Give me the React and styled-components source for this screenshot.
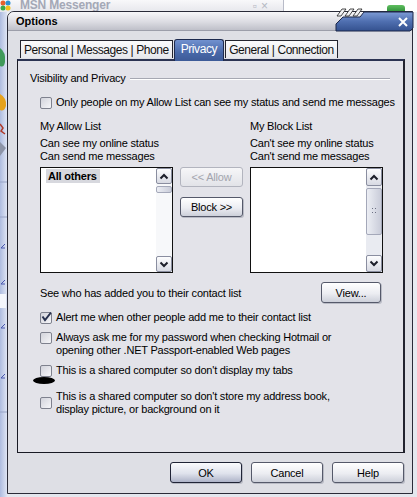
import React from 'react'
import styled, { createGlobalStyle } from 'styled-components'

const GlobalStyle = createGlobalStyle`
  html, body { margin: 0; padding: 0; }
  body {
    font-family: "Liberation Sans", Arial, sans-serif;
    font-size: 11px;
    letter-spacing: -0.2px;
    color: #000;
    background: #e9ebf0;
  }
  * { box-sizing: border-box; }
`

const Desktop = styled.div`
  position: relative;
  width: 417px;
  height: 497px;
  overflow: hidden;
`

/* background MSN window */
const BackWindow = styled.div`
  display: flex;
  flex-direction: column;
  height: 100%;
`
const BackTitle = styled.div`
  height: 12px;
  display: flex;
  align-items: flex-end;
  background: linear-gradient(#f8f8fa, #e6e7ec);
  overflow: hidden;
`
const BackName = styled.span`
  margin-left: 8px;
  font-weight: bold;
  font-size: 12px;
  line-height: 12px;
  color: #a4a8b6;
  transform: translateY(-1px);
`
const BackSpacer = styled.div`
  flex: 1;
`
const BackClose = styled.span`
  color: #b4b7c2;
  font-size: 12px;
  line-height: 12px;
  margin-right: 11px;
  letter-spacing: 4px;
`
const BackField = styled.div`
  width: 134px;
  height: 12px;
  border-left: 1px solid #b8bbc8;
  background: #fff;
  display: flex;
  justify-content: flex-end;
  align-items: flex-end;
  padding-right: 12px;
`
const GreenKey = styled.div`
  width: 18px;
  height: 7px;
  border-radius: 3px 3px 0 0;
  background: linear-gradient(#5fbf5f, #2f8f3a);
`
const BackBody = styled.div`
  flex: 1;
  display: flex;
`
const BackMain = styled.div`
  flex: 1;
  background: linear-gradient(#eef0f5, #e4e7ee);
`

/* dialog */
const Window = styled.div`
  position: absolute;
  left: 7px;
  top: 11px;
  width: 406px;
  height: 483px;
  border: 1px solid #2a2b38;
  border-radius: 7px 0 0 0;
  background: #dedfe5;
  display: flex;
  flex-direction: column;
`
const TitleBar = styled.div`
  height: 19px;
  display: flex;
  align-items: center;
  padding-left: 8px;
  border-radius: 6px 0 0 0;
  border-bottom: 1px solid #9c9eaa;
  background: linear-gradient(#f7f7f9, #dcdce2 55%, #bfc0c9);
  font-weight: bold;
  font-size: 11px;
  letter-spacing: 0;
`
const CloseArt = styled.svg`
  position: absolute;
  right: -3px;
  top: -7px;
`
const Body = styled.div`
  display: flex;
  flex-direction: column;
  padding: 7px 7px 0 9px;
`
const TabRow = styled.div`
  display: flex;
  align-items: flex-end;
  height: 21px;
  padding-left: 3px;
  gap: 1px;
  position: relative;
  z-index: 1;
`
const TabGroup = styled.div`
  height: 18px;
  margin-bottom: 1px;
  display: flex;
  align-items: center;
  padding: 0 3px;
  border: 1px solid #23242e;
  border-bottom: none;
  background: linear-gradient(#fbfbfc, #e6e7ec);
  font-size: 12px;
  letter-spacing: -0.45px;
  color: #111;
`
const Sep = styled.span`
  margin: 0 3px;
`
const ActiveTab = styled.div`
  height: 22px;
  margin-bottom: -2px;
  padding: 2px 6px 0;
  border: 1px solid #1d2a4e;
  border-bottom: none;
  border-radius: 3px 3px 0 0;
  background: linear-gradient(#7191cf, #4868a8 60%, #3d5b98);
  color: #fff;
  font-size: 12px;
  letter-spacing: -0.4px;
`
const Panel = styled.div`
  height: 394px;
  border: 1px solid #191a24;
  border-top: 2px solid #2b3352;
  border-right: 2px solid #22232e;
  background: #e3e3e9;
  padding: 11px 0 0 12px;
  display: flex;
  flex-direction: column;
`
const GroupHead = styled.div`
  display: flex;
  align-items: center;
  gap: 4px;
  line-height: 13px;
  margin-right: 13px;
  &::after {
    content: "";
    flex: 1;
    border-top: 1px solid #a6a8b2;
    border-bottom: 1px solid #fff;
  }
`
const Indent = styled.div`
  padding-left: 10px;
  display: flex;
  flex-direction: column;
`
const Option = styled.div`
  position: relative;
  display: grid;
  grid-template-columns: 12px 1fr;
  column-gap: 4px;
  align-items: ${p => p.$align || 'center'};
  line-height: 13px;
  margin-top: ${p => p.$top}px;
`
const Box = styled.div`
  width: 12px;
  height: 12px;
  margin-top: ${p => (p.$align === 'start' ? 1 : 0)}px;
  border: 1px solid #7e818e;
  border-radius: 2px;
  background: linear-gradient(135deg, #d2d3db, #f6f6f9);
  svg { display: block; margin: -2px 0 0 -1px; overflow: visible; }
`
const Scribble = styled.span`
  position: absolute;
  left: -7px;
  top: 13px;
  width: 22px;
  height: 7px;
  border-radius: 50%;
  background: #000;
`
const Lists = styled.div`
  display: grid;
  grid-template-columns: 133px 63px 133px;
  column-gap: 7px;
  row-gap: 4px;
  margin-top: 11px;
`
const ColHead = styled.div`
  line-height: 13px;
  grid-column: ${p => p.$col};
  p { margin: 4px 0 0; }
`
const ListBox = styled.div`
  height: 106px;
  display: flex;
  border: 1px solid #111;
  background: #fff;
`
const Items = styled.div`
  flex: 1;
  padding: 1px 0 0 5px;
`
const Item = styled.span`
  display: inline-block;
  padding: 0 3px 0 2px;
  line-height: 14px;
  font-weight: bold;
  background: #d7d8de;
`
const Scroll = styled.div`
  width: 16px;
  display: flex;
  flex-direction: column;
  background: ${p => p.$track};
`
const ArrowBtn = styled.div`
  height: ${p => p.$h || 16}px;
  border: 1px solid #8a8ea0;
  border-radius: 2px;
  background: linear-gradient(#fdfdfe, #d8dae3);
  display: flex;
  align-items: center;
  justify-content: center;
`
const Thumb = styled.div`
  height: ${p => p.$h}px;
  margin-top: 2px;
  border: 1px solid #a4a8b9;
  border-radius: 2px;
  background: linear-gradient(90deg, #eceef4, #c9ccd9);
  display: flex;
  align-items: center;
  justify-content: center;
`
const Track = styled.div`
  flex: 1;
`
const MoveButtons = styled.div`
  display: flex;
  flex-direction: column;
  gap: 10px;
`
const Button = styled.button`
  width: ${p => p.$w}px;
  height: ${p => p.$h || 21}px;
  padding: 0;
  font-family: inherit;
  font-size: 11px;
  letter-spacing: inherit;
  color: ${p => (p.disabled ? '#a3a5ae' : '#000')};
  border: 1px solid ${p => (p.$def ? '#202436' : p.disabled ? '#b2b4be' : '#55596a')};
  border-radius: 3px;
  background: ${p =>
    p.$def
      ? 'linear-gradient(#fafbfd, #dfe2ec 55%, #aeb3c8)'
      : p.disabled
      ? 'linear-gradient(#f6f6f8, #e2e3e8)'
      : 'linear-gradient(#ffffff, #ecedf2 55%, #cdd0da)'};
  box-shadow: ${p => (p.disabled ? 'none' : '1px 1px 0 #b9bbc5')};
`
const SeeRow = styled.div`
  margin-top: 9px;
  padding-right: 22px;
  display: flex;
  align-items: center;
  justify-content: space-between;
`
const Footer = styled.div`
  display: flex;
  justify-content: flex-end;
  gap: 9px;
  padding: 9px 1px 0 0;
`

function Check({ checked, align }) {
  return (
    <Box $align={align}>
      {checked && (
        <svg width="12" height="12" viewBox="0 0 12 12">
          <path d="M2.5 5.5 L5 9 L11 1.5" fill="none" stroke="#27304e" strokeWidth="2" />
        </svg>
      )}
    </Box>
  )
}

function Arrow({ down }) {
  return (
    <svg width="10" height="7" viewBox="0 0 10 7">
      <path
        d={down ? 'M1.5 1.5 L5 5 L8.5 1.5' : 'M1.5 5.5 L5 2 L8.5 5.5'}
        fill="none"
        stroke="#1d1f2a"
        strokeWidth="2"
      />
    </svg>
  )
}

function Grip() {
  return (
    <svg width="5" height="7" viewBox="0 0 5 7">
      <rect x="0" y="0" width="1" height="1" fill="#6d7184" />
      <rect x="3" y="0" width="1" height="1" fill="#6d7184" />
      <rect x="0" y="4" width="1" height="1" fill="#6d7184" />
      <rect x="3" y="4" width="1" height="1" fill="#6d7184" />
    </svg>
  )
}

function Sidebar() {
  return (
    <svg width="7" height="485" viewBox="0 0 7 485">
      <defs>
        <linearGradient id="sb" x1="0" x2="1">
          <stop offset="0" stopColor="#aebce0" />
          <stop offset="1" stopColor="#dfe5f4" />
        </linearGradient>
      </defs>
      <rect width="7" height="485" fill="url(#sb)" />
      <path d="M0 36 Q6 40 5 50 Q4 56 0 54 Z" fill="#3f9a5a" />
      <path d="M0 82 Q7 86 6 94 Q4 100 0 98 Z" fill="#e6a21c" />
      <path d="M0 112 L3 116 L1 119 L5 122" fill="none" stroke="#b03a2a" strokeWidth="1.5" />
      <path d="M0 130 L6 136 L0 144 Z" fill="#8d94a8" />
      <line x1="0" y1="170" x2="7" y2="170" stroke="#98a4c6" />
      <line x1="0" y1="205" x2="7" y2="205" stroke="#98a4c6" />
      <path d="M5 232 L1 236 L5 236" fill="none" stroke="#4a58b0" />
      <path d="M5 268 L1 272 L5 272" fill="none" stroke="#4a58b0" />
      <rect x="0" y="282" width="6" height="14" fill="#f4f6fc" />
      <path d="M5 312 L1 316 L5 316" fill="none" stroke="#4a58b0" />
      <path d="M5 362 L1 366 L5 366" fill="none" stroke="#4a58b0" />
      <line x1="0" y1="400" x2="7" y2="400" stroke="#98a4c6" />
    </svg>
  )
}

function Logo() {
  return (
    <svg width="12" height="12" viewBox="0 0 12 12">
      <circle cx="3" cy="3" r="2.5" fill="#e8602c" />
      <circle cx="8" cy="3" r="2.5" fill="#2f8fd0" />
      <circle cx="3" cy="8" r="2.5" fill="#3aa84a" />
      <circle cx="8" cy="8" r="2.5" fill="#f2c21c" />
    </svg>
  )
}

export default function App() {
  return (
    <Desktop>
      <GlobalStyle />
      <BackWindow>
        <BackTitle>
          <Logo />
          <BackName>MSN Messenger</BackName>
          <BackSpacer />
          <BackClose>▫×</BackClose>
          <BackField>
            <GreenKey />
          </BackField>
        </BackTitle>
        <BackBody>
          <Sidebar />
          <BackMain />
        </BackBody>
      </BackWindow>

      <Window>
        <TitleBar>Options</TitleBar>
        <CloseArt width="82" height="27" viewBox="0 0 82 27">
          <defs>
            <linearGradient id="cb" x1="0" y1="0" x2="0" y2="1">
              <stop offset="0" stopColor="#7d9bd6" />
              <stop offset="0.5" stopColor="#4f6fb0" />
              <stop offset="1" stopColor="#34518f" />
            </linearGradient>
          </defs>
          <path
            d="M3 26 L3 19 L10 12 L27 12 L31 7 L80 7 L80 23 L77 26 Z"
            fill="url(#cb)"
            stroke="#1b2648"
          />
          <path d="M4 11 L9 4 L13 4 L8 11 Z" fill="#f2f2f4" stroke="#222" strokeWidth="0.8" />
          <path d="M12 11 L17 4 L21 4 L16 11 Z" fill="#f2f2f4" stroke="#222" strokeWidth="0.8" />
          <path d="M20 11 L25 4 L29 4 L24 11 Z" fill="#f2f2f4" stroke="#222" strokeWidth="0.8" />
          <path d="M66 13 L74 21 M74 13 L66 21" stroke="#fff" strokeWidth="2" />
        </CloseArt>

        <Body>
          <TabRow>
            <TabGroup>
              Personal<Sep>|</Sep>Messages<Sep>|</Sep>Phone
            </TabGroup>
            <ActiveTab>Privacy</ActiveTab>
            <TabGroup>
              General<Sep>|</Sep>Connection
            </TabGroup>
          </TabRow>

          <Panel>
            <GroupHead>Visibility and Privacy</GroupHead>
            <Indent>
              <Option $top={11}>
                <Check />
                <span>Only people on my Allow List can see my status and send me messages</span>
              </Option>

              <Lists>
                <ColHead $col={1}>
                  My Allow List
                  <p>
                    Can see my online status
                    <br />
                    Can send me messages
                  </p>
                </ColHead>
                <ColHead $col={3}>
                  My Block List
                  <p>
                    Can't see my online status
                    <br />
                    Can't send me messages
                  </p>
                </ColHead>

                <ListBox>
                  <Items>
                    <Item>All others</Item>
                  </Items>
                  <Scroll $track="#f7f8fa">
                    <ArrowBtn><Arrow /></ArrowBtn>
                    <Thumb $h={7} />
                    <Track />
                    <ArrowBtn><Arrow down /></ArrowBtn>
                  </Scroll>
                </ListBox>
                <MoveButtons>
                  <Button $w={63} $h={20} disabled>&lt;&lt; Allow</Button>
                  <Button $w={63} $h={20}>Block &gt;&gt;</Button>
                </MoveButtons>
                <ListBox>
                  <Items />
                  <Scroll $track="#e9ebf1">
                    <ArrowBtn $h={18}><Arrow /></ArrowBtn>
                    <Thumb $h={47}><Grip /></Thumb>
                    <Track />
                    <ArrowBtn $h={17}><Arrow down /></ArrowBtn>
                  </Scroll>
                </ListBox>
              </Lists>

              <SeeRow>
                <span>See who has added you to their contact list</span>
                <Button $w={60}>View...</Button>
              </SeeRow>

              <Option $top={8}>
                <Check checked />
                <span>Alert me when other people add me to their contact list</span>
              </Option>
              <Option $top={7} $align="start">
                <Check align="start" />
                <span>
                  Always ask me for my password when checking Hotmail or
                  <br />
                  opening other .NET Passport-enabled Web pages
                </span>
              </Option>
              <Option $top={7}>
                <Check />
                <span>This is a shared computer so don't display my tabs</span>
                <Scribble />
              </Option>
              <Option $top={13}>
                <Check />
                <span>
                  This is a shared computer so don't store my address book,
                  <br />
                  display picture, or background on it
                </span>
              </Option>
            </Indent>
          </Panel>

          <Footer>
            <Button $w={72} $def>OK</Button>
            <Button $w={72}>Cancel</Button>
            <Button $w={72}>Help</Button>
          </Footer>
        </Body>
      </Window>
    </Desktop>
  )
}
